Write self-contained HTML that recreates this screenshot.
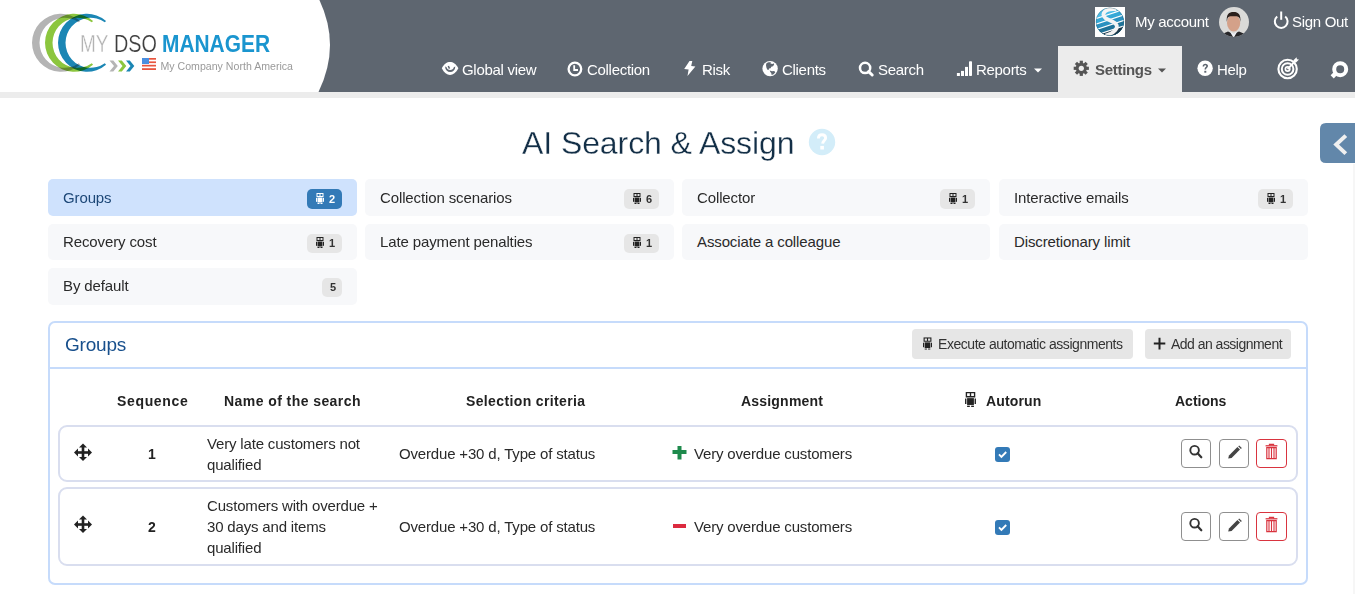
<!DOCTYPE html>
<html><head><meta charset="utf-8">
<style>
*{box-sizing:border-box;margin:0;padding:0}
html,body{width:1355px;height:594px;overflow:hidden;background:#fff;font-family:"Liberation Sans",sans-serif;color:#333}
.a{position:absolute;white-space:nowrap;line-height:1}
svg.a{overflow:visible}
#hdr{position:absolute;left:0;top:0;width:1355px;height:92px;background:#5e6670}
#strip{position:absolute;left:0;top:92px;width:1355px;height:6px;background:#ececec}
.nav{color:#fff;font-size:15px;letter-spacing:-0.3px}
.tab{position:absolute;height:37px;border-radius:5px;background:#f7f8fa}
.tab .t{position:absolute;left:15px;top:11px;font-size:15px;line-height:1;color:#2a2a2a;white-space:nowrap;letter-spacing:-0.12px}
.badge{position:absolute;right:15px;top:10px;height:20px;border-radius:5px;background:#e6e6e6;font-size:11px;font-weight:bold;line-height:20px;color:#333;white-space:nowrap}
.badge svg{position:absolute;left:9px;top:4px}
.badge b{position:absolute;right:7px;top:0}
.th{font-size:14px;font-weight:bold;color:#222}
.td{font-size:15px;color:#2a2a2a;letter-spacing:-0.17px}
.row{position:absolute;left:58px;width:1240px;border:2px solid #d9deef;border-radius:9px}
.btn{position:absolute;width:30px;height:29px;border:1px solid #8f8f8f;border-radius:4px;background:#fff}
.btn svg{position:absolute;left:-1px;top:-1px}
</style></head><body>
<div id="hdr"></div>
<div id="strip"></div>
<svg class="a" style="left:0;top:0" width="360" height="92"><path d="M0,0 L319.4,0 Q341,46 318.5,92 L0,92 Z" fill="#fff"/></svg>

<!-- logo -->
<svg class="a" style="left:0;top:0" width="320" height="92">
 <g style="isolation:isolate">
 <path style="mix-blend-mode:multiply" fill="#b4b4b4" d="M80.03,20.91 A29,29 0 1 0 80.03,64.69 L78.82,63.30 A25,25 0 1 1 78.82,22.30 Z"/>
 <path style="mix-blend-mode:multiply" fill="#8cc63e" d="M93.03,20.91 A29,29 0 1 0 93.03,64.69 L91.82,63.30 A25,25 0 1 1 91.82,22.30 Z"/>
 <path style="mix-blend-mode:multiply" fill="#1b86b4" d="M106.03,20.91 A29,29 0 1 0 106.03,64.69 L104.82,63.30 A25,25 0 1 1 104.82,22.30 Z"/>
 </g>
 <text x="80" y="51.6" font-family="Liberation Sans" font-size="23" fill="#b3b3b3" textLength="28.5" lengthAdjust="spacingAndGlyphs" stroke="#fff" stroke-width="0.35">MY</text>
 <text x="114" y="51.6" font-family="Liberation Sans" font-size="23" fill="#3e3e3e" textLength="43" lengthAdjust="spacingAndGlyphs" stroke="#fff" stroke-width="0.2">DSO</text>
 <text x="162" y="51.6" font-family="Liberation Sans" font-weight="bold" font-size="23" fill="#1a95cf" textLength="108" lengthAdjust="spacingAndGlyphs">MANAGER</text>
 <path d="M109.5,60.5 L114,66 L109.5,71.5 L113.3,71.5 L117.8,66 L113.3,60.5 Z" fill="#b5b5b5"/>
 <path d="M118,60.5 L122.5,66 L118,71.5 L121.8,71.5 L126.3,66 L121.8,60.5 Z" fill="#8cc63e"/>
 <path d="M126,60.5 L130.5,66 L126,71.5 L129.8,71.5 L134.3,66 L129.8,60.5 Z" fill="#1b86b4"/>
 <g transform="translate(142,58)">
  <rect x="0" y="0" width="14" height="12" fill="#fff"/>
  <rect x="0" y="0" width="14" height="1.7" fill="#e8553e"/>
  <rect x="0" y="3.4" width="14" height="1.7" fill="#e8553e"/>
  <rect x="0" y="6.8" width="14" height="1.7" fill="#e8553e"/>
  <rect x="0" y="10.2" width="14" height="1.8" fill="#e8553e"/>
  <rect x="0" y="0" width="7" height="6" fill="#4a8fe0"/>
 </g>
 <text x="160.5" y="70" font-family="Liberation Sans" font-size="11" fill="#9a9a9a" textLength="132.5" lengthAdjust="spacingAndGlyphs">My Company North America</text>
</svg>

<!-- top right -->
<svg class="a" style="left:1095px;top:7px" width="30" height="30" viewBox="0 0 30 30">
 <defs><clipPath id="sc"><circle cx="14.9" cy="14.7" r="13.9"/></clipPath></defs>
 <rect width="30" height="30" fill="#fff"/>
 <g clip-path="url(#sc)">
  <rect width="30" height="30" fill="#4bbce6"/>
  <path d="M0,12 L30,2 L30,30 L0,30 Z" fill="#36a8d6"/>
  <path d="M0,17.5 L30,7.5 L30,30 L0,30 Z" fill="#2a91c0"/>
  <path d="M0,23 L30,13 L30,30 L0,30 Z" fill="#1f7399"/>
  <path d="M0,28.5 L30,18.5 L30,30 L0,30 Z" fill="#1e3a4b"/>
  <g stroke="#fff" stroke-width="1.1" fill="none">
   <path d="M0,12 L30,2"/><path d="M0,17.5 L30,7.5"/><path d="M0,23 L30,13"/><path d="M0,28.5 L30,18.5"/>
  </g>
  <path d="M21.5,2.4 C15,1.6 8.6,3.2 8.4,7.6 C8.2,11 13,12.6 17.4,14.6 C21.8,16.6 23.2,19.6 20.4,23 C18.4,25.5 14.2,27.6 10.4,28.6" stroke="#f4f4f4" stroke-width="3.8" fill="none"/>
 </g>
 <circle cx="14.9" cy="14.7" r="13.9" fill="none" stroke="#1d2f3c" stroke-width="0.5" opacity="0.5"/>
</svg>
<span class="a nav" style="left:1135px;top:14px">My account</span>
<svg class="a" style="left:1219px;top:7px" width="30" height="30" viewBox="0 0 30 30">
 <defs><clipPath id="av"><circle cx="15" cy="15" r="15"/></clipPath></defs>
 <g clip-path="url(#av)">
  <rect width="30" height="30" fill="#dadad8"/>
  <ellipse cx="14.6" cy="16" rx="6.6" ry="8.6" fill="#d4a189"/>
  <path d="M7.8,15 C7.2,7 10,5 14.5,5 C19.5,5 22,7.5 21.4,15 L20.8,11.5 C20,9.5 18,9 14.5,9.2 C11,9 9,9.5 8.4,11.5 Z" fill="#2b201c"/>
  <path d="M0,32 L2,27.5 L9,24.5 L14.5,27 L20,24.5 L27,27.5 L30,32 Z" fill="#262629"/>
  <path d="M11,24.8 L14.6,31 L18.2,24.8 L14.6,26.5 Z" fill="#eef0f4"/>
 </g>
</svg>
<svg class="a" style="left:1272px;top:11px" width="18" height="18" viewBox="0 0 18 18">
 <path d="M5.2,5.5 A6.4,6.4 0 1 0 13.2,5.5" stroke="#fff" stroke-width="2" fill="none"/>
 <path d="M9.2,0.5 L9.2,8.8" stroke="#fff" stroke-width="2"/>
</svg>
<span class="a nav" style="left:1292px;top:14px">Sign Out</span>

<!-- nav -->
<svg class="a" style="left:441px;top:61px" width="18" height="15" viewBox="0 0 18 15">
 <path d="M0.8,7.2 C3,2.6 6,0.9 9,0.9 C12,0.9 15,2.6 17.4,7.2 C15,11.6 12,14 9,14 C6,14 3,11.6 0.8,7.2 Z" fill="#fff"/>
 <path d="M4.1,5.6 A5.1,5.4 0 0 0 14.3,5.6 L12.8,6.2 A3.7,3.6 0 0 1 5.6,6.2 Z" fill="#5e6670"/>
 <path d="M7.3,5 L8.5,7.6" stroke="#5e6670" stroke-width="1.5"/>
</svg>
<span class="a nav" style="left:462px;top:62px">Global view</span>
<svg class="a" style="left:567px;top:61px" width="17" height="17" viewBox="0 0 17 17">
 <circle cx="7.9" cy="8" r="6.3" fill="none" stroke="#fff" stroke-width="2.3"/>
 <path d="M7.2,4.2 L7.2,9 L11,9" fill="none" stroke="#fff" stroke-width="1.8"/>
</svg>
<span class="a nav" style="left:587px;top:62px">Collection</span>
<svg class="a" style="left:683px;top:60px" width="14" height="17" viewBox="0 0 14 17">
 <path d="M6.5,1 L9.3,1 L8.2,6 L12.4,6.5 L4.5,16 L5.6,9.6 L1.2,8.9 Z" fill="#fff"/>
</svg>
<span class="a nav" style="left:702px;top:62px">Risk</span>
<svg class="a" style="left:762px;top:60px" width="17" height="17" viewBox="0 0 17 17">
 <circle cx="8.1" cy="8.6" r="7.7" fill="#fff"/>
 <path d="M4.3,3.6 C5.5,2.2 7.5,2 9,2.4 L8.4,3.5 L10.5,4 L11.5,3.3 L12.2,4.6 L11,6.2 L9.3,6.8 L8.6,8.2 L7,8.5 L6.6,10.1 L5.2,9.4 L4.4,7.4 L4,5.2 Z" fill="#5e6670"/>
 <path d="M7.7,10.6 L10,11.2 L12.2,11 L13.3,12.2 L11.6,14.3 L9.7,14.9 L9.2,13 L8.3,12 Z" fill="#5e6670"/>
</svg>
<span class="a nav" style="left:782px;top:62px">Clients</span>
<svg class="a" style="left:857px;top:60px" width="18" height="18" viewBox="0 0 18 18">
 <circle cx="8.1" cy="7.9" r="5.1" fill="none" stroke="#fff" stroke-width="2.5"/>
 <path d="M11.6,11.6 L15.2,15" stroke="#fff" stroke-width="3" stroke-linecap="round"/>
</svg>
<span class="a nav" style="left:878px;top:62px">Search</span>
<svg class="a" style="left:956px;top:60px" width="17" height="17" viewBox="0 0 17 17">
 <rect x="0.9" y="13" width="3" height="3" fill="#fff"/>
 <rect x="5" y="10.9" width="3" height="5.1" fill="#fff"/>
 <rect x="9" y="6.9" width="3" height="9.1" fill="#fff"/>
 <rect x="13" y="1.2" width="3" height="14.8" rx="0.8" fill="#fff"/>
</svg>
<span class="a nav" style="left:976px;top:62px">Reports</span>
<svg class="a" style="left:1034px;top:68px" width="9" height="5" viewBox="0 0 9 5"><path d="M0,0.5 L8,0.5 L4,4.5 Z" fill="#fff"/></svg>
<div class="a" style="left:1058px;top:46px;width:124px;height:46px;background:#ececec"></div>
<svg class="a" style="left:1073px;top:60px" width="17" height="17" viewBox="0 0 17 17">
 <g transform="translate(8.3,8.3)" fill="#555">
  <rect x="-1.6" y="-7.6" width="3.2" height="15.2"/>
  <rect x="-1.6" y="-7.6" width="3.2" height="15.2" transform="rotate(45)"/>
  <rect x="-1.6" y="-7.6" width="3.2" height="15.2" transform="rotate(90)"/>
  <rect x="-1.6" y="-7.6" width="3.2" height="15.2" transform="rotate(135)"/>
  <circle r="5.6"/>
 </g>
 <circle cx="8.3" cy="8.3" r="2.6" fill="#ececec"/>
</svg>
<span class="a nav" style="left:1095px;top:62px;color:#555;font-weight:bold">Settings</span>
<svg class="a" style="left:1158px;top:68px" width="9" height="5" viewBox="0 0 9 5"><path d="M0,0.5 L8,0.5 L4,4.5 Z" fill="#555"/></svg>
<svg class="a" style="left:1197px;top:60px" width="17" height="17" viewBox="0 0 17 17">
 <circle cx="8.1" cy="8.3" r="7.7" fill="#fff"/>
 <path d="M5.6,6.4 C5.6,4.6 6.8,3.8 8.3,3.8 C9.9,3.8 11,4.8 11,6 C11,7.6 9.2,7.8 9,9.6 L7.5,9.6 C7.5,7.4 9.3,7.2 9.3,6.1 C9.3,5.5 8.9,5.2 8.3,5.2 C7.6,5.2 7.2,5.7 7.2,6.4 Z" fill="#5e6670"/>
 <rect x="7.3" y="10.8" width="2" height="1.9" fill="#5e6670"/>
</svg>
<span class="a nav" style="left:1217px;top:62px">Help</span>
<svg class="a" style="left:1276px;top:56px" width="24" height="24" viewBox="0 0 24 24">
 <circle cx="11.6" cy="13" r="9.2" fill="none" stroke="#fff" stroke-width="2.1"/>
 <circle cx="11.6" cy="13" r="5.8" fill="none" stroke="#fff" stroke-width="2"/>
 <circle cx="11.6" cy="13" r="2.2" fill="none" stroke="#fff" stroke-width="1.7"/>
 <path d="M11.6,13 L19,5.4" stroke="#fff" stroke-width="1.8"/>
 <path d="M17.2,4.4 L20.6,1.2 L20.9,3.2 L23,3.5 L19.8,6.8 Z" fill="#fff"/>
</svg>
<svg class="a" style="left:1328px;top:59px" width="22" height="22" viewBox="0 0 22 22">
 <circle cx="12.2" cy="10.2" r="6" fill="none" stroke="#fff" stroke-width="4"/>
 <path d="M7.5,14.5 L4.2,17.8" stroke="#fff" stroke-width="4.5"/>
</svg>

<!-- title -->
<span class="a" style="left:522px;top:127px;font-size:32px;letter-spacing:-0.08px;color:#132f47;-webkit-text-stroke:0.3px #fff">AI Search &amp; Assign</span>
<svg class="a" style="left:808px;top:128px" width="28" height="28" viewBox="0 0 28 28">
 <circle cx="14" cy="14" r="13.2" fill="#d3edf9"/>
 <path d="M10.4,10.6 C10.4,7.8 12,6.8 14,6.8 C16.2,6.8 17.6,8.1 17.6,10 C17.6,12.4 14.9,12.7 14.6,15.6" fill="none" stroke="#fff" stroke-width="2.9"/>
 <rect x="12.3" y="17.9" width="3.6" height="3.6" fill="#fff"/>
</svg>
<svg class="a" style="left:1320px;top:123px" width="35" height="40" viewBox="0 0 35 40">
 <path d="M6,0 L35,0 L35,40 L6,40 Q0,40 0,34 L0,6 Q0,0 6,0 Z" fill="#6287aa"/>
 <path d="M25.8,12.6 L16.2,21.6 L25.8,30.6" fill="none" stroke="#f0f0f0" stroke-width="4" stroke-linecap="butt" stroke-linejoin="miter"/>
</svg>

<!-- robot symbol -->
<svg width="0" height="0" style="position:absolute">
 <defs>
  <symbol id="rb" viewBox="0 0 8 11">
   <path fill-rule="evenodd" d="M0.5,0 L7.5,0 L7.5,4 L0.5,4 Z M1.5,1 L1.5,3 L3.5,3 L3.5,1 Z M4.5,1 L4.5,3 L6.5,3 L6.5,1 Z"/>
   <rect x="1.5" y="4.5" width="5" height="5"/>
   <rect x="0" y="4.8" width="1" height="4"/>
   <rect x="7" y="4.8" width="1" height="4"/>
   <rect x="1.5" y="10" width="2" height="1"/>
   <rect x="4.5" y="10" width="2" height="1"/>
  </symbol>
 </defs>
</svg>

<div class="a" style="left:1353px;top:164px;width:2px;height:430px;background:#f6f6f6"></div>
<!-- tabs -->
<div class="tab" style="left:48px;top:179px;width:309px;background:#cfe2fd"><span class="t" style="color:#1c4777">Groups</span><span class="badge" style="width:35px;background:#337ab7;color:#fff"><svg width="8" height="11" fill="#fff"><use href="#rb"/></svg><b>2</b></span></div>
<div class="tab" style="left:365px;top:179px;width:309px"><span class="t">Collection scenarios</span><span class="badge" style="width:35px"><svg width="8" height="11" fill="#222"><use href="#rb"/></svg><b>6</b></span></div>
<div class="tab" style="left:682px;top:179px;width:308px"><span class="t">Collector</span><span class="badge" style="width:35px"><svg width="8" height="11" fill="#222"><use href="#rb"/></svg><b>1</b></span></div>
<div class="tab" style="left:999px;top:179px;width:309px"><span class="t">Interactive emails</span><span class="badge" style="width:35px"><svg width="8" height="11" fill="#222"><use href="#rb"/></svg><b>1</b></span></div>
<div class="tab" style="left:48px;top:224px;width:309px;height:36px"><span class="t" style="top:10px">Recovery cost</span><span class="badge" style="width:35px;top:9.5px;height:19px;line-height:19px"><svg width="8" height="11" fill="#222" style="top:3px"><use href="#rb"/></svg><b>1</b></span></div>
<div class="tab" style="left:365px;top:224px;width:309px;height:36px"><span class="t" style="top:10px">Late payment penalties</span><span class="badge" style="width:35px;top:9.5px;height:19px;line-height:19px"><svg width="8" height="11" fill="#222" style="top:3px"><use href="#rb"/></svg><b>1</b></span></div>
<div class="tab" style="left:682px;top:224px;width:308px;height:36px"><span class="t" style="top:10px">Associate a colleague</span></div>
<div class="tab" style="left:999px;top:224px;width:309px;height:36px"><span class="t" style="top:10px">Discretionary limit</span></div>
<div class="tab" style="left:48px;top:268px;width:309px"><span class="t" style="top:10px">By default</span><span class="badge" style="width:20px;top:10px;height:19px;line-height:19px"><b style="right:6px">5</b></span></div>

<!-- panel -->
<div class="a" style="left:48px;top:321px;width:1260px;height:264px;border:2px solid #c6dbfb;border-radius:7px"></div>
<div class="a" style="left:49px;top:367px;width:1258px;height:2px;background:#c6dbfb"></div>
<span class="a" style="left:65px;top:335px;font-size:19px;color:#174f8c;letter-spacing:-0.2px">Groups</span>

<div class="a" style="left:912px;top:329px;width:221px;height:30px;background:#e6e6e6;border-radius:4px"></div>
<svg class="a" style="left:923px;top:337px" width="9" height="13" viewBox="0 0 8 11" fill="#222"><use href="#rb"/></svg>
<span class="a" style="left:938px;top:337px;font-size:14px;color:#333;letter-spacing:-0.45px">Execute automatic assignments</span>
<div class="a" style="left:1145px;top:329px;width:146px;height:30px;background:#e6e6e6;border-radius:4px"></div>
<svg class="a" style="left:1153px;top:337px" width="13" height="13" viewBox="0 0 13 13"><path d="M5.5,0.8 L7.5,0.8 L7.5,5.5 L12.3,5.5 L12.3,7.5 L7.5,7.5 L7.5,12.5 L5.5,12.5 L5.5,7.5 L0.8,7.5 L0.8,5.5 L5.5,5.5 Z" fill="#222"/></svg>
<span class="a" style="left:1171px;top:337px;font-size:14px;color:#333;letter-spacing:-0.52px">Add an assignment</span>

<!-- table header -->
<span class="a th" style="left:117px;top:394px;letter-spacing:0.65px">Sequence</span>
<span class="a th" style="left:224px;top:394px;letter-spacing:0.43px">Name of the search</span>
<span class="a th" style="left:466px;top:394px;letter-spacing:0.37px">Selection criteria</span>
<span class="a th" style="left:741px;top:394px;letter-spacing:0.2px">Assignment</span>
<svg class="a" style="left:965px;top:392px" width="11" height="15" viewBox="0 0 8 11" fill="#222"><use href="#rb"/></svg>
<span class="a th" style="left:986px;top:394px;letter-spacing:0.15px">Autorun</span>
<span class="a th" style="left:1175px;top:394px">Actions</span>

<!-- row 1 -->
<div class="row" style="top:425px;height:57px"></div>
<svg class="a" style="left:73px;top:443px" width="20" height="19" viewBox="0 0 20 19">
 <g fill="#222">
  <rect x="8.7" y="3" width="2.6" height="13"/>
  <rect x="3" y="8.2" width="14" height="2.6"/>
  <path d="M10,0.5 L14,4.5 L6,4.5 Z"/>
  <path d="M10,18 L14,14 L6,14 Z"/>
  <path d="M1,9.5 L5,5.5 L5,13.5 Z"/>
  <path d="M19,9.5 L15,5.5 L15,13.5 Z"/>
 </g>
</svg>
<span class="a th" style="left:148px;top:447px">1</span>
<span class="a td" style="left:207px;top:436px">Very late customers not</span>
<span class="a td" style="left:207px;top:457px">qualified</span>
<span class="a td" style="left:399px;top:446px">Overdue +30 d, Type of status</span>
<svg class="a" style="left:672px;top:445px" width="15" height="15" viewBox="0 0 15 15"><path d="M5.5,1 L9.5,1 L9.5,5 L14.5,5 L14.5,9 L9.5,9 L9.5,14.5 L5.5,14.5 L5.5,9 L0.5,9 L0.5,5 L5.5,5 Z" fill="#1e8a4c"/></svg>
<span class="a td" style="left:694px;top:446px">Very overdue customers</span>
<svg class="a" style="left:995px;top:447px" width="15" height="15" viewBox="0 0 15 15"><rect width="15" height="15" rx="3" fill="#337ab7"/><path d="M4,7.4 L6.4,9.8 L11.2,5" fill="none" stroke="#fff" stroke-width="1.9"/></svg>
<div class="btn" style="left:1181px;top:439px"><svg width="30" height="29" viewBox="0 0 30 29"><circle cx="13.6" cy="11.2" r="4.3" fill="none" stroke="#333" stroke-width="1.9"/><path d="M16.6,14.2 L20.3,18.3" stroke="#333" stroke-width="2.2" stroke-linecap="round"/></svg></div>
<div class="btn" style="left:1219px;top:439px"><svg width="30" height="29" viewBox="0 0 30 29"><path d="M9.2,19.6 L10,16.4 L18.4,8 L21,10.6 L12.6,19 Z" fill="#444"/><path d="M19.2,7.2 L20.2,6.4 L22.8,9 L21.9,9.9 Z" fill="#444"/></svg></div>
<div class="btn" style="left:1256px;top:439px;width:31px;border-color:#d9343f"><svg width="31" height="29" viewBox="0 0 31 29"><path d="M9.6,6.8 L21.4,6.8" stroke="#d9343f" stroke-width="1.3"/><path d="M13.4,6.6 L13.4,5.4 L17.6,5.4 L17.6,6.6" fill="none" stroke="#d9343f" stroke-width="1.1"/><path d="M10.8,8.7 L20.2,8.7 L20.2,19.6 L10.8,19.6 Z" fill="none" stroke="#d9343f" stroke-width="1.2"/><path d="M13,9 L13,19.3 M15.5,9 L15.5,19.3 M18,9 L18,19.3" stroke="#d9343f" stroke-width="1.1"/></svg></div>

<!-- row 2 -->
<div class="row" style="top:487px;height:79px"></div>
<svg class="a" style="left:73px;top:515px" width="20" height="19" viewBox="0 0 20 19">
 <g fill="#222">
  <rect x="8.7" y="3" width="2.6" height="13"/>
  <rect x="3" y="8.2" width="14" height="2.6"/>
  <path d="M10,0.5 L14,4.5 L6,4.5 Z"/>
  <path d="M10,18 L14,14 L6,14 Z"/>
  <path d="M1,9.5 L5,5.5 L5,13.5 Z"/>
  <path d="M19,9.5 L15,5.5 L15,13.5 Z"/>
 </g>
</svg>
<span class="a th" style="left:148px;top:520px">2</span>
<span class="a td" style="left:207px;top:498px">Customers with overdue +</span>
<span class="a td" style="left:207px;top:519px">30 days and items</span>
<span class="a td" style="left:207px;top:540px">qualified</span>
<span class="a td" style="left:399px;top:519px">Overdue +30 d, Type of status</span>
<div class="a" style="left:673px;top:524px;width:13px;height:4px;background:#dc2a3f"></div>
<span class="a td" style="left:694px;top:519px">Very overdue customers</span>
<svg class="a" style="left:995px;top:520px" width="15" height="15" viewBox="0 0 15 15"><rect width="15" height="15" rx="3" fill="#337ab7"/><path d="M4,7.4 L6.4,9.8 L11.2,5" fill="none" stroke="#fff" stroke-width="1.9"/></svg>
<div class="btn" style="left:1181px;top:512px"><svg width="30" height="29" viewBox="0 0 30 29"><circle cx="13.6" cy="11.2" r="4.3" fill="none" stroke="#333" stroke-width="1.9"/><path d="M16.6,14.2 L20.3,18.3" stroke="#333" stroke-width="2.2" stroke-linecap="round"/></svg></div>
<div class="btn" style="left:1219px;top:512px"><svg width="30" height="29" viewBox="0 0 30 29"><path d="M9.2,19.6 L10,16.4 L18.4,8 L21,10.6 L12.6,19 Z" fill="#444"/><path d="M19.2,7.2 L20.2,6.4 L22.8,9 L21.9,9.9 Z" fill="#444"/></svg></div>
<div class="btn" style="left:1256px;top:512px;width:31px;border-color:#d9343f"><svg width="31" height="29" viewBox="0 0 31 29"><path d="M9.6,6.8 L21.4,6.8" stroke="#d9343f" stroke-width="1.3"/><path d="M13.4,6.6 L13.4,5.4 L17.6,5.4 L17.6,6.6" fill="none" stroke="#d9343f" stroke-width="1.1"/><path d="M10.8,8.7 L20.2,8.7 L20.2,19.6 L10.8,19.6 Z" fill="none" stroke="#d9343f" stroke-width="1.2"/><path d="M13,9 L13,19.3 M15.5,9 L15.5,19.3 M18,9 L18,19.3" stroke="#d9343f" stroke-width="1.1"/></svg></div>

</body></html>
